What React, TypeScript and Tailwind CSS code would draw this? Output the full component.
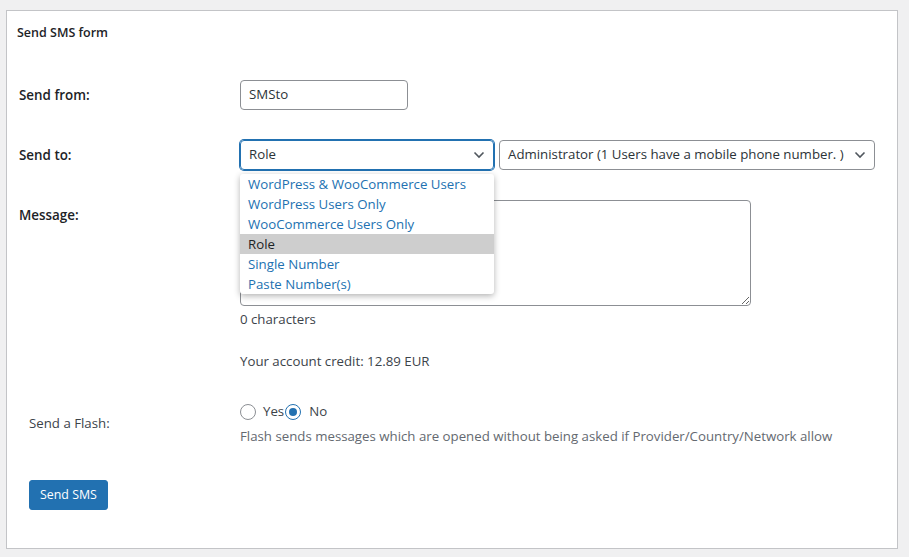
import React from 'react';

const options = [
  'WordPress & WooCommerce Users',
  'WordPress Users Only',
  'WooCommerce Users Only',
  'Role',
  'Single Number',
  'Paste Number(s)',
];

const Chevron = () => (
  <svg width="12" height="8" viewBox="0 0 12 8" className="shrink-0">
    <polyline points="1.5,1.5 6,6 10.5,1.5" fill="none" stroke="#50575e" strokeWidth="1.6" />
  </svg>
);

const Radio = ({ checked }: { checked?: boolean }) => (
  <span
    className={`flex h-4 w-4 items-center justify-center rounded-full border bg-white ${
      checked ? 'border-[#2271b1]' : 'border-[#8c8f94]'
    }`}
  >
    {checked && <span className="h-2 w-2 rounded-full bg-[#2271b1]" />}
  </span>
);

export default function App() {
  return (
    <div className="min-h-[557px] bg-[#f0f0f1] pt-[10px] pl-[6px] pr-[11px] font-['Open_Sans',sans-serif] text-[13.25px] text-[#3c434a]">
      <div className="relative h-[539px] border border-[#c3c4c7] bg-white pl-[10px] pt-[13px]">
        <h2 className="text-[12.5px] font-semibold leading-[18px] text-[#1d2327]">Send SMS form</h2>

        <div className="mt-[38px] pl-[2px]">
          {/* Send from */}
          <div className="flex items-center">
            <label className="w-[221px] pt-[1px] text-[13.4px] font-semibold text-[#1d2327]">Send from:</label>
            <div className="flex h-[30px] w-[168px] items-center rounded-[4px] border border-[#8c8f94] px-[8px] text-[#2c3338]">
              SMSto
            </div>
          </div>

          {/* Send to */}
          <div className="mt-[30px] flex items-center">
            <label className="w-[221px] pt-[1px] text-[13.4px] font-semibold text-[#1d2327]">Send to:</label>
            <div className="relative">
              <div className="flex h-[30px] w-[254px] items-center justify-between rounded-[4px] border border-[#2271b1] pl-[8px] pr-[8px] text-[#2c3338] shadow-[0_0_0_1px_#2271b1]">
                <span>Role</span>
                <Chevron />
              </div>
              <div className="absolute left-0 top-[34px] z-10 w-[254px] rounded-[3px] bg-white shadow-[0_2px_6px_rgba(0,0,0,0.3)]">
                {options.map((o) => (
                  <div
                    key={o}
                    className={`h-[20px] pl-[8px] leading-[20px] ${
                      o === 'Role' ? 'bg-[#cecece] text-[#1d2327]' : 'text-[#2271b1]'
                    }`}
                  >
                    {o}
                  </div>
                ))}
              </div>
            </div>
            <div className="ml-[5px] flex h-[30px] w-[376px] items-center justify-between whitespace-nowrap rounded-[4px] border border-[#8c8f94] pl-[8px] pr-[8px] text-[#2c3338]">
              <span>Administrator (1 Users have a mobile phone number. )</span>
              <Chevron />
            </div>
          </div>

          {/* Message */}
          <div className="mt-[30px] flex">
            <label className="w-[221px] pt-[5px] text-[13.4px] font-semibold leading-[20px] text-[#1d2327]">Message:</label>
            <div>
              <textarea className="block h-[106px] w-[511px] rounded-[4px] border border-[#8c8f94] bg-white" />
              <p className="mt-[3px] leading-[20px]">0 characters</p>
              <p className="mt-[22px] leading-[20px]">Your account credit: 12.89 EUR</p>
            </div>
          </div>
        </div>

        {/* Flash */}
        <div className="mt-[31px] flex items-center pl-[12px]">
          <label className="w-[211px]">Send a Flash:</label>
          <div>
            <div className="flex h-[20px] items-center">
              <Radio />
              <span className="ml-[7px]">Yes</span>
              <span className="ml-[1px]">
                <Radio checked />
              </span>
              <span className="ml-[8px]">No</span>
            </div>
            <p className="mt-[4px] leading-[20px] text-[#646970]">
              Flash sends messages which are opened without being asked if Provider/Country/Network allow
            </p>
          </div>
        </div>

        <div className="mt-[34px] pl-[12px]">
          <button className="h-[30px] rounded-[3px] border border-[#2271b1] bg-[#2271b1] px-[10px] text-[12.4px] text-white">
            Send SMS
          </button>
        </div>
      </div>
    </div>
  );
}
